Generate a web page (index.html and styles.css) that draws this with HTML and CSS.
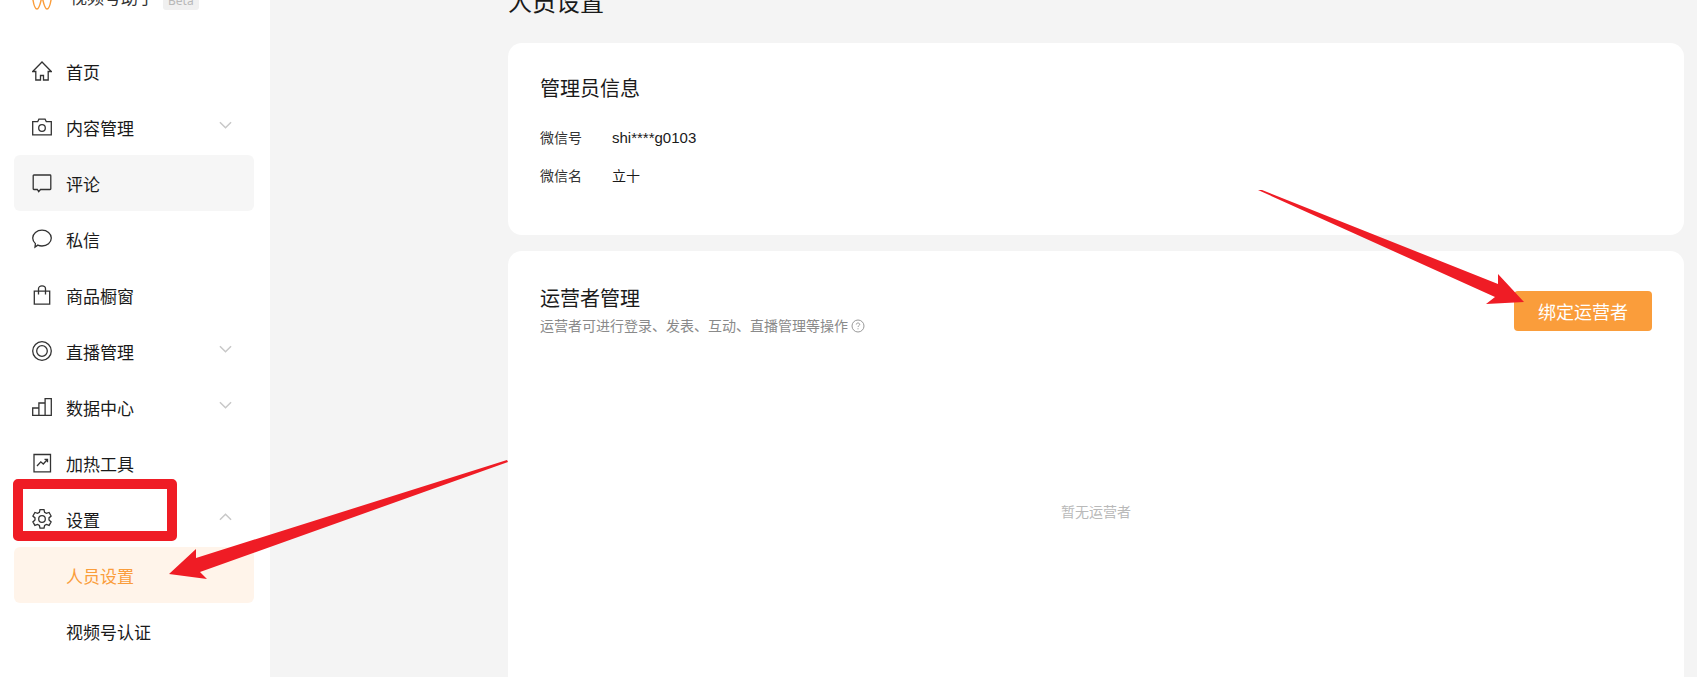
FILE: index.html
```html
<!DOCTYPE html>
<html lang="zh-CN">
<head>
<meta charset="utf-8">
<title>人员设置</title>
<link rel="stylesheet" href="styles.css">
</head>
<body>
<div class="app">
  <aside class="sidebar">
    <div class="brand">
      <svg class="brand-logo" viewBox="0 0 22 22" fill="none" stroke="#fa9d3b" stroke-width="1.500"><path d="M1 4C2 15 4 21 6 21 8.500 21 10 13 11 8 12 13 13.500 21 16 21 18 21 20 15 21 4"/></svg>
      <span class="brand-name">视频号助手</span>
      <span class="brand-tag">Beta</span>
    </div>
    <nav class="nav">
      <a class="nav-item"><svg class="ico" viewBox="0 0 20 20"><path d="M.7 10.500 10 1l9.300 9.500h-3.100V19h-4.700v-4.500h-3V19H3.800v-8.500z"/></svg><span>首页</span></a>
      <a class="nav-item"><svg class="ico" viewBox="0 0 20 20"><path d="M.7 4.700h5l1.200-2.500h6.200l1.200 2.500h5v13.100H.7z"/><circle cx="10" cy="11" r="3.300"/></svg><span>内容管理</span><svg class="chev" viewBox="0 0 14 8"><path d="M1 1l6 6 6-6"/></svg></a>
      <a class="nav-item hover"><svg class="ico" viewBox="0 0 20 20"><path d="M1.200 2.700c0-.4.300-.7.700-.7h16.200c.4 0 .7.300.7.700v13.100c0 .4-.3.700-.7.700H8.500l-1.800 2.200-1.400-2.200H1.900c-.4 0-.7-.3-.7-.7z"/></svg><span>评论</span></a>
      <a class="nav-item"><svg class="ico" viewBox="0 0 20 20"><path d="M10 1.200c5.100 0 9.300 3.400 9.300 7.900S15.100 17 10 17c-1.500 0-3-.3-4.200-.9l-2.800 2 .4-3.500C1.800 13.100.7 11.200.7 9.100.7 4.600 4.900 1.200 10 1.200z"/></svg><span>私信</span></a>
      <a class="nav-item"><svg class="ico" viewBox="0 0 20 20"><path d="M2.300 6.200h15.400v13H2.300zM6.500 9.500V3.800C6.500 2 8 .8 10 .8s3.500 1.200 3.500 3v5.700"/></svg><span>商品橱窗</span></a>
      <a class="nav-item"><svg class="ico" viewBox="0 0 20 20"><circle cx="10" cy="10" r="9.300"/><circle cx="10" cy="10" r="5.300"/></svg><span>直播管理</span><svg class="chev" viewBox="0 0 14 8"><path d="M1 1l6 6 6-6"/></svg></a>
      <a class="nav-item"><svg class="ico" viewBox="0 0 20 20"><path d="M.7 11h6.200v7.300H.7zM6.900 6h6.200v12.300H6.900zM13.100 1.700h6.200v16.600h-6.200z"/></svg><span>数据中心</span><svg class="chev" viewBox="0 0 14 8"><path d="M1 1l6 6 6-6"/></svg></a>
      <a class="nav-item"><svg class="ico" viewBox="0 0 20 20"><path d="M2 1.500h16.500V18.800H2zM5 13l3.800-4.200 2.500 2.200 4-4.500M12.500 6.300h3v3"/></svg><span>加热工具</span></a>
      <a class="nav-item"><svg class="ico" viewBox="0 0 20 20"><circle cx="10" cy="10" r="3.300"/><path d="M8 .7h4l.6 2.700 1.800 1 2.700-.9 2 3.500-2.100 1.900v2.100l2.100 1.900-2 3.500-2.700-.9-1.800 1-.6 2.700H8l-.6-2.700-1.800-1-2.700.9-2-3.500L3 11V8.900L.9 7l2-3.500 2.700.9 1.800-1z"/></svg><span>设置</span><svg class="chev" viewBox="0 0 14 8"><path d="M1 7l6-6 6 6"/></svg></a>
      <a class="nav-item sub active"><span>人员设置</span></a>
      <a class="nav-item sub"><span>视频号认证</span></a>
    </nav>
  </aside>
  <main class="main">
    <h1 class="page-title">人员设置</h1>
    <section class="card admin">
      <h2 class="card-title">管理员信息</h2>
      <dl class="info">
        <dt>微信号</dt><dd class="wxid">shi****g0103</dd>
        <dt>微信名</dt><dd>立十</dd>
      </dl>
    </section>
    <section class="card ops">
      <div class="ops-head">
        <div>
          <h2 class="card-title">运营者管理</h2>
          <p class="desc">运营者可进行登录、发表、互动、直播管理等操作<svg class="help" viewBox="0 0 14 14"><circle cx="7" cy="7" r="6"/><path d="M5.300 5.500C5.300 4.500 6 4 7 4s1.700.6 1.700 1.400c0 1.300-1.700 1.300-1.700 2.600M7 9.300v1"/></svg></p>
        </div>
        <button class="bind">绑定运营者</button>
      </div>
      <p class="empty">暂无运营者</p>
    </section>
  </main>
</div>
<div class="mark-box"></div>
<svg class="marks" viewBox="0 0 1697 677">
  <path d="M507 460 196 558 196 549 169 574 207 579 200 572 508 462z"/>
  <path d="M1258 190 1262 190 1498 284 1498 274 1524 302 1486 304 1495 297z"/>
</svg>
</body>
</html>
```
FILE: styles.css
```css
* { box-sizing: border-box; }
html, body { margin: 0; height: 100%; overflow: hidden; }
body {
  background: #f4f4f4;
  color: #1a1a1a;
  font-family: "Noto Sans", "Noto Sans CJK SC", sans-serif;
  position: relative;
}
.app { display: flex; margin-top: -16px; height: 693px; }
.sidebar { width: 270px; flex: none; background: #fff; padding: 0 16px 0 14px; }
.brand { display: flex; align-items: flex-end; height: 26px; padding-left: 17px; margin-bottom: 33px; }
.brand-logo { width: 22px; height: 22px; flex: none; }
.brand-name { font-size: 17px; line-height: 24px; margin-left: 17px; color: #333; }
.brand-tag { font-size: 12px; line-height: 18px; margin-left: 8px; padding: 0 5px; background: #f0f0f0; color: #b8b8b8; border-radius: 3px; }
.nav { display: flex; flex-direction: column; }
.nav-item { display: flex; align-items: center; height: 56px; padding-left: 18px; font-size: 17px; border-radius: 6px; padding-right: 22px; }
.nav-item span { flex: 1; margin-left: 14px; }
.nav-item.sub span { margin-left: 34px; }
.hover { background: #f6f6f6; }
.active { background: #fff4ea; color: #fa9d3b; }
.ico { width: 20px; height: 20px; flex: none; fill: none; stroke: #333; stroke-width: 1.300; }
.chev { width: 13px; height: 8px; flex: none; fill: none; stroke: #c8c8c8; stroke-width: 1.600; margin-top: -4px; }
.main { width: 1176px; margin-left: 238px; flex: none; }
.page-title { font-size: 24px; font-weight: 400; line-height: 36px; margin: 0 0 23px; height: 36px; }
.card { background: #fff; border-radius: 14px; padding: 32px; }
.admin { height: 192px; margin-bottom: 16px; }
.ops { height: 460px; padding-top: 34px; }
.card-title { font-size: 20px; font-weight: 400; line-height: 28px; margin: 0; }
.info { display: grid; grid-template-columns: 72px 1fr; row-gap: 18px; margin: 25px 0 0; font-size: 14px; line-height: 20px; }
.info dt { color: #333; }
.info dd { margin: 0; }
.wxid { font-family: "Liberation Sans", sans-serif; font-size: 15px; }
.ops-head { display: flex; justify-content: space-between; align-items: flex-start; }
.desc { margin: 2px 0 0; font-size: 14px; line-height: 22px; color: #8a8a8a; display: flex; align-items: center; }
.help { width: 14px; height: 14px; margin-left: 3px; fill: none; stroke: #999; stroke-width: 1; }
.bind { width: 138px; height: 40px; margin: 6px 0 0; border: 0; border-radius: 4px; background: #fa9d3b; color: #fff; font: 400 18px "Noto Sans CJK SC", sans-serif; }
.empty { text-align: center; margin: 165px 0 0; font-size: 14px; line-height: 20px; color: #b9b9b9; }
.mark-box { position: absolute; left: 13px; top: 479px; width: 164px; height: 62px; border: 10px solid #ef1c25; border-radius: 5px; }
.marks { position: absolute; left: 0; top: 0; width: 1697px; height: 677px; }
.marks path { fill: #ef1c25; }
```
